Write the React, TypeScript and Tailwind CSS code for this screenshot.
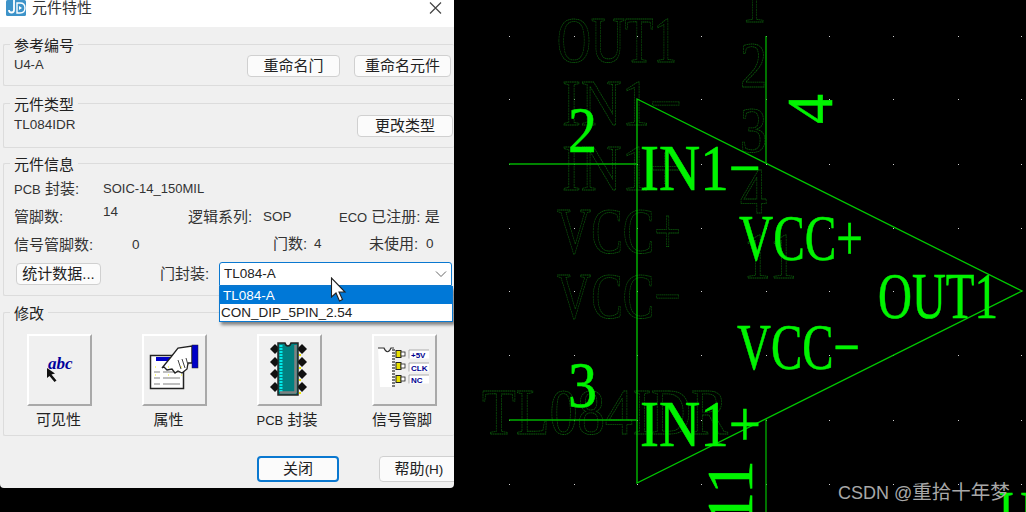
import React from "react";

const Group = ({ title, className, children }: { title: string; className: string; children: React.ReactNode }) => (
  <fieldset className={`ml-[3px] min-w-0 rounded-[2px] border border-r-0 border-[#dcdcdc] ${className}`}>
    <legend className="relative top-px ml-[6px] px-[4px] text-[15px] leading-[15px] text-[#222]">{title}</legend>
    {children}
  </fieldset>
);

const Btn = ({ label, className }: { label: string; className: string }) => (
  <button className={`flex h-[22px] shrink-0 items-center justify-center rounded-[4px] border border-[#d0d0d0] bg-[#fbfbfb] text-[15px] text-[#222] ${className}`}>
    {label}
  </button>
);

const L = ({ children, className }: { children: React.ReactNode; className?: string }) => (
  <span className={`text-[13.5px] ${className ?? ""}`}>{children}</span>
);

const S = ({ children, className }: { children: React.ReactNode; className?: string }) => (
  <span className={`text-[13px] ${className ?? ""}`}>{children}</span>
);

const ToolBtn = ({ label, labelClass, children }: { label: React.ReactNode; labelClass: string; children: React.ReactNode }) => (
  <div className="flex w-[65px] flex-col items-center">
    <div className="h-[72px] w-[65px] border-2 border-t-white border-r-[#a9a9a9] border-b-[#a9a9a9] border-l-white bg-[#f0f0f0]">
      {children}
    </div>
    <span className={`mt-[4px] text-[15px] leading-[20px] whitespace-nowrap text-[#222] ${labelClass}`}>{label}</span>
  </div>
);

const AbcIcon = () => (
  <svg width="61" height="68" viewBox="0 0 61 68">
    <text x="19" y="33" fontFamily="Liberation Serif" fontStyle="italic" fontWeight="bold" fontSize="17" fill="#00009c">abc</text>
    <path d="M18 32v10l2.5-2 5 6 2-1.5-5-6 3.5-1z" fill="#111" />
  </svg>
);

const FormIcon = () => (
  <svg width="61" height="68" viewBox="0 0 61 68">
    <rect x="6.5" y="19.5" width="33" height="33" fill="#fff" stroke="#222" strokeWidth="1.5" />
    <rect x="12" y="21" width="26" height="4" fill="#0000c8" />
    <path d="M10 36h6M19 36h17M10 42h6M19 42h17M10 48h6M19 48h17" stroke="#aaa" strokeWidth="1.5" />
    <path d="M18 32l9-11 7-9 14-2v17h-4l-1 6-5 4-4-2-3 2-3-4-5 1-3-3z" fill="#fff" stroke="#222" strokeWidth="1.3" />
    <path d="M34 24l3 9M38 23l3 9M42 22l2 7" fill="none" stroke="#444" strokeWidth="1" />
    <rect x="48" y="9" width="6" height="23" fill="#0000c8" stroke="#222" strokeWidth="0.5" />
    <path d="M11 31h1M24 31h1M37 31h1M11 39h1M24 39h1M37 39h1" stroke="#f6f000" strokeWidth="1.2" />
  </svg>
);

const ChipIcon = () => (
  <svg width="61" height="68" viewBox="0 0 61 68">
    {[13, 26, 38, 51].map((y) => (
      <g key={y}>
        <path d={`M16 ${y - 5}l5 5-5 5-5-5z`} fill="#111" />
        <path d={`M43 ${y - 5}l5 5-5 5-5-5z`} fill="#111" />
        <path d={`M40 ${y + 6}h2`} stroke="#f0e800" strokeWidth="2" />
      </g>
    ))}
    <path d="M19 7h7c1 4 5 4 6 0h7v52H19z" fill="#008080" stroke="#222" strokeWidth="1.5" />
    <path d="M22 9v48" stroke="#00e8e8" strokeWidth="3" strokeDasharray="2 1" />
    <path d="M36.5 9v48M21 56.5h16" stroke="#808080" strokeWidth="2.5" />
  </svg>
);

const PinIcon = () => (
  <svg width="61" height="68" viewBox="0 0 61 68">
    <path d="M4 12h6c2 5 5 5 7 0h2v39H6z" fill="#fff" />
    <path d="M4 12h6c2 5 5 5 7 0h3" fill="none" stroke="#333" strokeWidth="1.2" />
    <path d="M19.5 13v38" stroke="#777" strokeWidth="3" strokeDasharray="2 1" />
    {[18, 30, 43].map((y) => (
      <g key={y}>
        <rect x="22" y={y - 3.5} width="5" height="7" fill="#e8e000" stroke="#222" />
        <rect x="27" y={y - 2} width="4" height="4" fill="#fff" stroke="#222" strokeWidth="0.8" />
      </g>
    ))}
    {[
      { t: "+5V", y: 14 },
      { t: "CLK", y: 27 },
      { t: "NC", y: 39 },
    ].map(({ t, y }) => (
      <g key={t}>
        <rect x="35" y={y} width="20" height="8.5" fill="#fff" />
        <path d={`M35 ${y + 8.5}V${y}H55`} fill="none" stroke="#999" strokeWidth="0.8" />
        <text x="37" y={y + 7.5} fontFamily="Liberation Sans" fontWeight="bold" fontSize="8" fill="#000090">{t}</text>
      </g>
    ))}
  </svg>
);

const AppIcon = () => (
  <svg width="20" height="16" viewBox="0 0 20 16" className="shrink-0">
    <rect width="20" height="16" rx="1.5" fill="#3d93c9" />
    <path d="M8 0v10a2.5 2.5 0 0 1-5 0" fill="none" stroke="#fff" strokeWidth="1.8" />
    <path d="M11 3h3c3.5 0 5 2.5 5 5s-1.500 5-5 5h-3z" fill="none" stroke="#fff" strokeWidth="1.4" />
    <path d="M13 6l3 2-3 2z" fill="#fff" />
  </svg>
);

const xs = [509, 574, 637, 701, 766, 829, 893, 958, 1021];
const ys = [36, 99, 164, 228, 291, 355, 420, 484];

type Label = { x: number; y: number; w: number; t: string; rotate?: boolean };

const ghost: Label[] = [
  { x: 557, y: 62, w: 120, t: "OUT1" },
  { x: 562, y: 125, w: 120, t: "IN1−" },
  { x: 562, y: 190, w: 120, t: "IN1+" },
  { x: 557, y: 253, w: 124, t: "VCC+" },
  { x: 557, y: 318, w: 124, t: "VCC−" },
  { x: 482, y: 434, w: 246, t: "TL084IDR" },
  { x: 742, y: 22, w: 24, t: "1" },
  { x: 740, y: 87, w: 27, t: "2" },
  { x: 740, y: 152, w: 27, t: "3" },
  { x: 740, y: 213, w: 27, t: "4" },
  { x: 743, y: 278, w: 54, t: "11" },
];

const bright: Label[] = [
  { x: 640, y: 190, w: 121, t: "IN1−" },
  { x: 640, y: 446, w: 121, t: "IN1+" },
  { x: 739, y: 260, w: 124, t: "VCC+" },
  { x: 737, y: 369, w: 123, t: "VCC−" },
  { x: 878, y: 318, w: 120, t: "OUT1" },
  { x: 568, y: 152, w: 29, t: "2" },
  { x: 568, y: 407, w: 29, t: "3" },
  { x: 832, y: 124, w: 30, t: "4", rotate: true },
  { x: 752, y: 526, w: 66, t: "11", rotate: true },
  { x: 999, y: 536, w: 34, t: "U" },
];

const Schematic = () => (
  <svg width="572" height="512" viewBox="454 0 572 512" className="shrink-0">
    <g fill="#d0d0d0">
      {ys.flatMap((y) => xs.map((x) => <rect key={`${x}-${y}`} x={x} y={y} width="1" height="1" />))}
    </g>
    {ghost.map((g) => (
      <text
        key={g.t + g.y}
        x={g.x}
        y={g.y}
        fontSize="65"
        fontFamily="Liberation Serif"
        fill="none"
        stroke="#0b5a0b"
        strokeWidth="0.8"
        strokeDasharray="2 0.6"
        textLength={g.w}
        lengthAdjust="spacingAndGlyphs"
      >
        {g.t}
      </text>
    ))}
    <path d="M637 99V483L1022 291Z" fill="none" stroke="#00c800" strokeWidth="1.3" />
    <path d="M509 164H637M509 420H637M766 36V163M766 419V512" fill="none" stroke="#00b000" strokeWidth="1.3" />
    {bright.map((b) => (
      <text
        key={b.t + b.y}
        x={b.x}
        y={b.y}
        fontSize="65"
        fontFamily="Liberation Serif"
        fill="#00f400"
        stroke="#00f400"
        strokeWidth="0.6"
        textLength={b.w}
        lengthAdjust="spacingAndGlyphs"
        transform={b.rotate ? `rotate(-90 ${b.x} ${b.y})` : undefined}
      >
        {b.t}
      </text>
    ))}
  </svg>
);

export default function App() {
  return (
    <div className="relative flex h-[512px] w-[1026px] items-start overflow-hidden bg-black font-['Liberation_Sans','Noto_Sans_CJK_SC',sans-serif]">
      <div className="relative flex h-[488px] w-[454px] shrink-0 flex-col overflow-hidden rounded-b-[4px] bg-[#f0f0f0]">
        <div className="flex h-[27px] shrink-0 items-start justify-between bg-white pr-[12px] pl-[6px]">
          <div className="flex items-start gap-[6px]">
            <AppIcon />
            <span className="-mt-[2px] text-[15px] leading-[20px] text-[#333]">元件特性</span>
          </div>
          <svg width="13" height="12" viewBox="0 0 13 12" className="mt-[2px]">
            <path d="M1 0.500l11 11M12 0.500l-11 11" stroke="#444" strokeWidth="1.2" />
          </svg>
        </div>

        <Group title="参考编号" className="mt-[10px] h-[49px]">
          <div className="flex items-start justify-between pr-[3px] pl-[10px] text-[#333]">
            <S className="mt-[5px] leading-[16px]">U4-A</S>
            <div className="mt-[3px] flex gap-[14px]">
              <Btn label="重命名门" className="w-[93px]" />
              <Btn label="重命名元件" className="w-[97px]" />
            </div>
          </div>
        </Group>

        <Group title="元件类型" className="mt-[10px] h-[52px]">
          <div className="flex items-start justify-between pr-[1px] pl-[10px] text-[#333]">
            <L className="mt-[6px] leading-[16px]">TL084IDR</L>
            <Btn label="更改类型" className="mt-[4px] w-[96px]" />
          </div>
        </Group>

        <Group title="元件信息" className="mt-[8px] h-[140px]">
          <div className="flex flex-col pl-[10px] text-[15px] leading-[16px] text-[#333]">
            <div className="mt-[8px] flex h-[20px] items-center">
              <span className="w-[89px]"><S>PCB</S> 封装:</span>
              <S>SOIC-14_150MIL</S>
            </div>
            <div className="mt-[8px] flex h-[20px] items-center">
              <span className="w-[89px]">管脚数:</span>
              <L className="-mt-[10px] w-[85px]">14</L>
              <span className="w-[75px]">逻辑系列:</span>
              <L className="w-[76px]">SOP</L>
              <span className="whitespace-nowrap"><S>ECO</S> 已注册: 是</span>
            </div>
            <div className="mt-[8px] flex h-[20px] items-center">
              <span className="w-[118px]">信号管脚数:</span>
              <L className="w-[141px]">0</L>
              <span className="-mt-[3px] w-[41px]">门数:</span>
              <L className="-mt-[3px] w-[55px]">4</L>
              <span className="-mt-[3px] w-[57px]">未使用:</span>
              <L className="-mt-[3px]">0</L>
            </div>
            <div className="mt-[7px] flex items-center">
              <Btn label="统计数据..." className="ml-[2px] w-[85px]" />
              <span className="ml-[59px] w-[59px]">门封装:</span>
              <div className="relative flex h-[24px] w-[233px] items-center justify-between rounded-t-[3px] border border-[#0a78d0] bg-white pr-[4px] pl-[4px]">
                <L className="text-[#222]">TL084-A</L>
                <svg width="12" height="8" viewBox="0 0 12 8">
                  <path d="M1 1.500l5 5 5-5" fill="none" stroke="#666" strokeWidth="1" />
                </svg>
                {/* open combo list lies over the dialog */}
                <div className="absolute top-[23px] -left-px z-10 w-[234px] border border-[#0a78d0] bg-white text-[13.5px] leading-[17px] shadow-[2px_3px_3px_rgba(0,0,0,0.45)]">
                  <div className="bg-[#0078d7] pl-[3px] text-white">TL084-A</div>
                  <div className="pl-[1px] text-[#222]">CON_DIP_5PIN_2.54</div>
                </div>
              </div>
            </div>
          </div>
        </Group>

        <Group title="修改" className="mt-[9px] h-[131px]">
          <div className="mt-[14px] flex gap-[50px] pl-[23px]">
            <ToolBtn label="可见性" labelClass="-ml-[2px]"><AbcIcon /></ToolBtn>
            <ToolBtn label="属性" labelClass="-ml-[12px] -mt-[1px]"><FormIcon /></ToolBtn>
            <ToolBtn label={<><S>PCB</S> 封装</>} labelClass="-ml-[5px]"><ChipIcon /></ToolBtn>
            <ToolBtn label="信号管脚" labelClass="-ml-[5px]"><PinIcon /></ToolBtn>
          </div>
        </Group>

        <div className="mt-[20px] flex pl-[257px]">
          <button className="h-[26px] w-[82px] shrink-0 rounded-[4px] border-2 border-[#0a78d0] bg-[#fbfbfb] text-[15px] text-[#222]">关闭</button>
          <button className="ml-[40px] h-[26px] w-[80px] shrink-0 rounded-[4px] border border-[#d0d0d0] bg-[#fbfbfb] text-[15px] text-[#222]">帮助<L>(H)</L></button>
        </div>

        <svg className="absolute top-[277px] left-[330px] z-20" width="18" height="26" viewBox="0 0 18 26">
          <path d="M1.500 1v19l4.500-4 3.500 8 3-1.500-3.500-7.500h6z" fill="#fff" stroke="#222" strokeWidth="1.1" />
        </svg>
      </div>

      <Schematic />

      <span className="absolute top-[481px] left-[838px] text-[18px] leading-[22px] whitespace-nowrap text-[#a8a8a8]">
        CSDN @<span className="text-[19.500px]">重拾十年梦</span>
      </span>
    </div>
  );
}
